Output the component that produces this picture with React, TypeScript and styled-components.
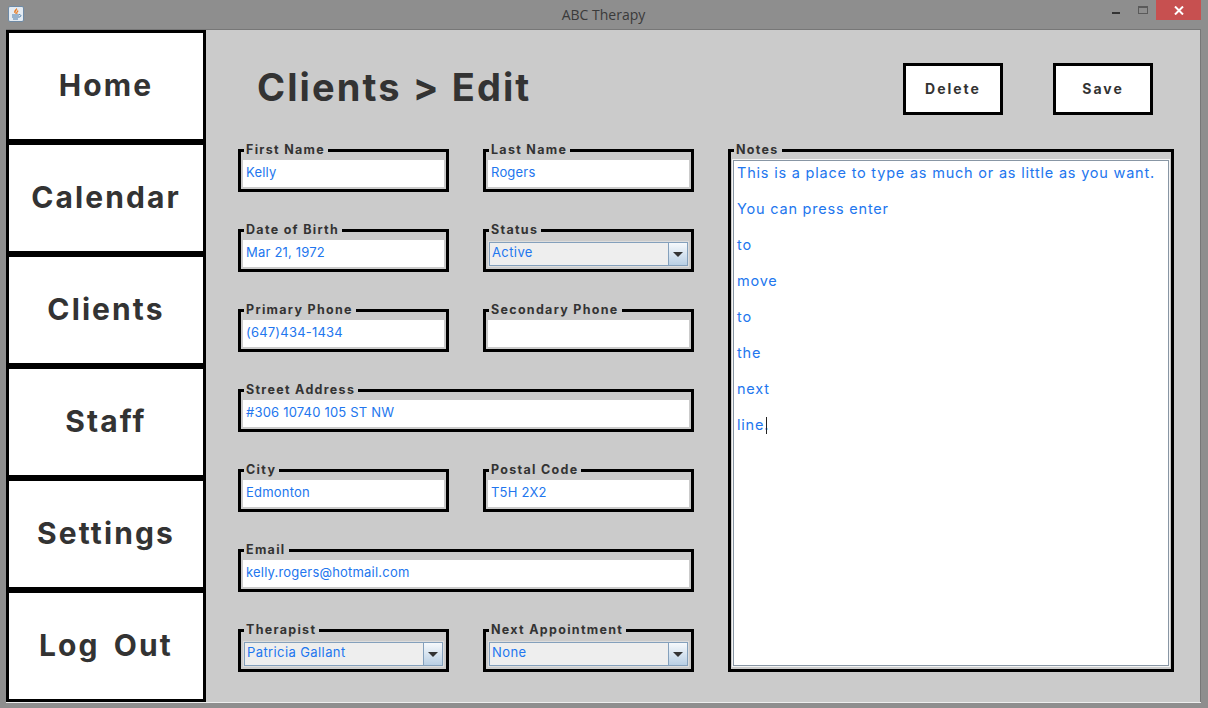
import React from "react";
import styled, { createGlobalStyle } from "styled-components";

const GlobalStyle = createGlobalStyle`
  html, body {
    margin: 0;
    padding: 0;
    background: #8e8e8e;
  }
  * {
    box-sizing: border-box;
  }
`;

const FONT = `Inter, "Liberation Sans", sans-serif`;
const TEXT_DARK = "#333333";
const TEXT_BLUE = "#2276ee";

const Window = styled.div`
  width: 1208px;
  height: 708px;
  overflow: hidden;
  background: #8e8e8e;
`;

const TitleBar = styled.header`
  height: 29px;
  display: grid;
  grid-template-columns: 1fr auto 1fr;
  padding: 0 7px 0 8px;
`;

const AppIcon = styled.svg`
  width: 16px;
  height: 16px;
  margin-top: 6px;
`;

const WindowTitle = styled.div`
  font: 14px "Open Sans", "Liberation Sans", sans-serif;
  color: #3a3a3a;
  line-height: 29px;
  margin-left: -2px;
`;

const Controls = styled.div`
  display: flex;
  justify-content: flex-end;
  align-items: flex-start;
`;

const MinimizeBox = styled.div`
  width: 8px;
  height: 2px;
  margin: 12px 18px 0 0;
  background: #333333;
`;

const MaximizeBox = styled.div`
  width: 10px;
  height: 8px;
  margin: 6px 8px 0 0;
  border: 1px solid #5a5a5a;
  border-top-width: 2px;
`;

const CloseBox = styled.div`
  width: 45px;
  height: 20px;
  background: #c75050;
  display: flex;
  align-items: center;
  justify-content: center;
`;

const Frame = styled.div`
  display: flex;
  margin: 0 7px 0 6px;
  height: 674px;
  border-top: 1px solid #777777;
  border-bottom: 1px solid #eeeeee;
`;

const Nav = styled.nav`
  width: 200px;
  flex: none;
  display: flex;
  flex-direction: column;
`;

const NavButton = styled.button`
  height: 112px;
  border: 3px solid #000000;
  background: #ffffff;
  color: ${TEXT_DARK};
  font: 700 30px ${FONT};
  letter-spacing: 2.1px;
  word-spacing: 5px;
  padding: 0 0 2px;
`;

const Panel = styled.main`
  flex: 1;
  background: #cbcbcb;
  border-right: 1px solid #777777;
  padding: 0 25px 0 32px;
`;

const Header = styled.div`
  height: 119px;
  display: flex;
  align-items: center;
  padding: 0 22px 2px 19px;
`;

const PageTitle = styled.h1`
  margin: 0 auto 3px 0;
  font: 700 38px ${FONT};
  letter-spacing: 2.1px;
  color: ${TEXT_DARK};
`;

const ActionButton = styled.button`
  width: 100px;
  height: 52px;
  margin-left: 50px;
  border: 3px solid #000000;
  background: #ffffff;
  color: ${TEXT_DARK};
  font: 700 14px ${FONT};
  letter-spacing: 2px;
  padding: 0;
`;

const Content = styled.div`
  display: flex;
  gap: 34px;
`;

const FieldGrid = styled.div`
  width: 456px;
  display: grid;
  grid-template-columns: 211px 211px;
  grid-auto-rows: 43px;
  gap: 37px 34px;
`;

const Group = styled.section<{ $wide?: boolean }>`
  position: relative;
  grid-column: ${(p) => (p.$wide ? "span 2" : "auto")};
  border: 3px solid #000000;
  padding: 8px 2px 2px;
`;

const Legend = styled.span`
  position: absolute;
  left: 3px;
  top: -10px;
  padding: 0 3px 0 2px;
  background: #cbcbcb;
  color: ${TEXT_DARK};
  font: 700 12.5px/15px ${FONT};
  letter-spacing: 1.3px;
  white-space: nowrap;
`;

const TextField = styled.div`
  height: 27px;
  background: #ffffff;
  padding: 0 3px;
  color: ${TEXT_BLUE};
  font: 400 13px/25px ${FONT};
  letter-spacing: 0.2px;
  white-space: nowrap;
`;

const Combo = styled.div`
  height: 26px;
  margin-top: 1px;
  display: flex;
  border: 1px solid #dddddd;
`;

const ComboValue = styled.div`
  flex: 1;
  background: #eeeeee;
  border: 1px solid #84a0bc;
  padding: 0 2px;
  color: ${TEXT_BLUE};
  font: 400 13px/19px ${FONT};
  letter-spacing: 0.4px;
  white-space: nowrap;
`;

const ComboArrow = styled.div`
  width: 19px;
  flex: none;
  border: 1px solid #84a0bc;
  border-left: none;
  background: linear-gradient(#f6f9fc, #b9cfe4);
  display: flex;
  align-items: center;
  justify-content: center;
  &::after {
    content: "";
    border-left: 5px solid transparent;
    border-right: 5px solid transparent;
    border-top: 5px solid #333333;
  }
`;

const NotesGroup = styled(Group)`
  width: 446px;
  height: 523px;
`;

const NotesBox = styled.div`
  height: 506px;
  border: 1px solid #8896a4;
  outline: 1px solid #f4f4f4;
  background: #ffffff;
  padding: 3px 3px;
  color: ${TEXT_BLUE};
  font: 400 14.5px/18px ${FONT};
  letter-spacing: 0.79px;
`;

const NoteLine = styled.p`
  margin: 0 0 18px;
  white-space: nowrap;
`;

const Caret = styled.span`
  display: inline-block;
  width: 1px;
  height: 17px;
  margin-left: -3px;
  vertical-align: -4px;
  background: #222222;
`;

const notes = [
  "This is a place to type as much or as little as you want.",
  "You can press enter",
  "to",
  "move",
  "to",
  "the",
  "next",
  "line.",
];

type Field = { label: string; value: string; combo?: boolean; wide?: boolean };

const fields: Field[] = [
  { label: "First Name", value: "Kelly" },
  { label: "Last Name", value: "Rogers" },
  { label: "Date of Birth", value: "Mar 21, 1972" },
  { label: "Status", value: "Active", combo: true },
  { label: "Primary Phone", value: "(647)434-1434" },
  { label: "Secondary Phone", value: "" },
  { label: "Street Address", value: "#306 10740 105 ST NW", wide: true },
  { label: "City", value: "Edmonton" },
  { label: "Postal Code", value: "T5H 2X2" },
  { label: "Email", value: "kelly.rogers@hotmail.com", wide: true },
  { label: "Therapist", value: "Patricia Gallant", combo: true },
  { label: "Next Appointment", value: "None", combo: true },
];

const navItems = ["Home", "Calendar", "Clients", "Staff", "Settings", "Log Out"];

function App() {
  return (
    <Window>
      <GlobalStyle />
      <TitleBar>
        <div>
          <AppIcon viewBox="0 0 16 16">
            <rect x="0.5" y="0.5" width="15" height="15" rx="1.5" fill="#e4ebf2" stroke="#6f8aa5" />
            <path d="M8.5 2.5 C10 4 6 5 7.5 7.5 C6 6.5 6 5 8.5 2.5 Z M10 4.5 C10.5 6 8.5 6 9 8 C8 7 8.5 5.5 10 4.5 Z" fill="#e8761a" stroke="#e8761a" strokeWidth="0.6" />
            <path d="M4 9 H11 M4 11 H11 M5 13 H10 M11 8.5 C13.5 8.5 13.5 11 11 11" fill="none" stroke="#4d7ba6" strokeWidth="1" />
          </AppIcon>
        </div>
        <WindowTitle>ABC Therapy</WindowTitle>
        <Controls>
          <MinimizeBox />
          <MaximizeBox />
          <CloseBox>
            <svg width="10" height="9" viewBox="0 0 10 9">
              <path d="M1 0.5 L9 8.5 M9 0.5 L1 8.5" stroke="#ffffff" strokeWidth="2" />
            </svg>
          </CloseBox>
        </Controls>
      </TitleBar>
      <Frame>
        <Nav>
          {navItems.map((item) => (
            <NavButton key={item}>{item}</NavButton>
          ))}
        </Nav>
        <Panel>
          <Header>
            <PageTitle>Clients &gt; Edit</PageTitle>
            <ActionButton>Delete</ActionButton>
            <ActionButton>Save</ActionButton>
          </Header>
          <Content>
            <FieldGrid>
              {fields.map((field) => (
                <Group key={field.label} $wide={field.wide}>
                  <Legend>{field.label}</Legend>
                  {field.combo ? (
                    <Combo>
                      <ComboValue>{field.value}</ComboValue>
                      <ComboArrow />
                    </Combo>
                  ) : (
                    <TextField>{field.value}</TextField>
                  )}
                </Group>
              ))}
            </FieldGrid>
            <NotesGroup>
              <Legend>Notes</Legend>
              <NotesBox>
                {notes.map((line, i) => (
                  <NoteLine key={i}>
                    {line}
                    {i === notes.length - 1 && <Caret />}
                  </NoteLine>
                ))}
              </NotesBox>
            </NotesGroup>
          </Content>
        </Panel>
      </Frame>
    </Window>
  );
}

export default App;
